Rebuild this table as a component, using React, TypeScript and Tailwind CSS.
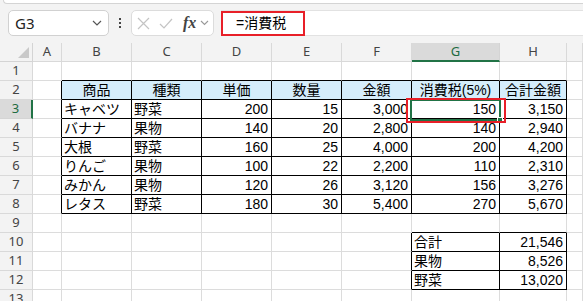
import { Fragment } from 'react'

type Cell = string | number | null

const COLS = ['A', 'B', 'C', 'D', 'E', 'F', 'G', 'H', '']

const fmt = (v: Cell) => (typeof v === 'number' ? v.toLocaleString('en-US') : v ?? '')

// rows 1..13, columns A..I
const ROWS: Cell[][] = [
  [],
  [null, '商品', '種類', '単価', '数量', '金額', '消費税(5%)', '合計金額'],
  [null, 'キャベツ', '野菜', 200, 15, 3000, 150, 3150],
  [null, 'バナナ', '果物', 140, 20, 2800, 140, 2940],
  [null, '大根', '野菜', 160, 25, 4000, 200, 4200],
  [null, 'りんご', '果物', 100, 22, 2200, 110, 2310],
  [null, 'みかん', '果物', 120, 26, 3120, 156, 3276],
  [null, 'レタス', '野菜', 180, 30, 5400, 270, 5670],
  [],
  [null, null, null, null, null, null, '合計', 21546],
  [null, null, null, null, null, null, '果物', 8526],
  [null, null, null, null, null, null, '野菜', 13020],
  [],
]

// bordered ranges: B2:H8 and G10:H12
function inTable(r: number, c: number) {
  if (r >= 2 && r <= 8 && c >= 1 && c <= 7) return true
  if (r >= 10 && r <= 12 && c >= 6 && c <= 7) return true
  return false
}

function NameBox() {
  return (
    <div className="flex h-[26px] w-[101px] items-center justify-between rounded-[5px] border border-[#d1d1d1] bg-white pl-[6px] pr-[6px]">
      <span className="font-['Noto_Sans'] text-[15px] text-[#222]">G3</span>
      <svg width="10" height="6" viewBox="0 0 10 6" fill="none" stroke="#555" strokeWidth="1.2">
        <path d="M1 1l4 4 4-4" />
      </svg>
    </div>
  )
}

function FormulaButtons() {
  return (
    <div className="flex h-[26px] w-[83px] items-center rounded-[5px] border border-[#dcdcdc] bg-white pl-[5px]">
      <svg width="13" height="13" viewBox="0 0 13 13" stroke="#c4c4c4" strokeWidth="1.2">
        <path d="M1 1l11 11M12 1L1 12" />
      </svg>
      <svg className="ml-[9px]" width="14" height="11" viewBox="0 0 14 11" fill="none" stroke="#c4c4c4" strokeWidth="1.2">
        <path d="M1 6l4 4 8-9" />
      </svg>
      <span className="ml-[10px] font-['Liberation_Serif'] text-[16px] italic font-bold text-[#444] leading-none">fx</span>
      <svg className="ml-[4px]" width="9" height="6" viewBox="0 0 9 6" fill="none" stroke="#999" strokeWidth="1.1">
        <path d="M1 1l3.5 3.5L8 1" />
      </svg>
    </div>
  )
}

export default function App() {
  return (
    <div className="h-[301px] w-[583px] overflow-hidden bg-[#f3f3f3] font-['Liberation_Sans','Noto_Sans_CJK_JP',sans-serif]">
      {/* ribbon edge */}
      <div className="ml-[3px] h-[4px] rounded-bl-[5px] border-b border-l border-[#d4d4d4] bg-white" />

      {/* formula bar */}
      <div className="ml-[8px] mt-[6px] flex h-[26px] items-center">
        <NameBox />
        <div className="ml-[10px] flex w-[3px] flex-col gap-[2px]">
          <span className="h-[2px] w-[2px] bg-[#444]" />
          <span className="h-[2px] w-[2px] bg-[#444]" />
          <span className="h-[2px] w-[2px] bg-[#444]" />
        </div>
        <div className="ml-[9px]">
          <FormulaButtons />
        </div>
        <div className="ml-[7px] flex h-[26px] flex-1 items-center border-y border-[#e2e2e2] bg-white">
          <div className="flex h-[25px] w-[84px] items-center border-2 border-[#e81f28] pl-[13px] text-[14px] text-black">
            =消費税
          </div>
        </div>
      </div>

      <div className="h-[7px]" />

      {/* sheet */}
      <div className="relative grid grid-cols-[33px_29px_70px_70px_70px_70px_70px_88px_67px_1fr] bg-white">
        {/* column headers */}
        <div className="relative h-[19px] border-b border-r border-[#d4d4d4] bg-[#f3f3f3]">
          <svg className="absolute right-[3px] bottom-[3px]" width="11" height="11" viewBox="0 0 11 11">
            <path d="M11 0V11H0z" fill="#c9c9c9" />
          </svg>
        </div>
        {COLS.map((l, i) =>
          i === 6 ? (
            <div
              key={l + i}
              className="flex h-[19px] items-center justify-center border-b-2 border-r border-b-[#217346] border-r-[#d4d4d4] bg-[#dadada] font-['Noto_Sans'] text-[13px] text-[#1d6b41]"
            >
              {l}
            </div>
          ) : (
            <div
              key={l + i}
              className="flex h-[19px] items-center justify-center border-b border-r border-[#d9d9d9] bg-[#f3f3f3] font-['Noto_Sans'] text-[13px] text-[#444]"
            >
              {l}
            </div>
          ),
        )}

        {ROWS.map((row, ri) => {
          const r = ri + 1
          return (
            <Fragment key={r}>
              {r === 3 ? (
                <div className="flex h-[19px] items-center justify-center border-b border-r-2 border-b-[#d4d4d4] border-r-[#217346] bg-[#dadada] font-['Noto_Sans'] text-[13px] text-[#1d6b41]">
                  {r}
                </div>
              ) : (
                <div className="flex h-[19px] items-center justify-center border-b border-r border-[#d9d9d9] bg-[#f3f3f3] font-['Noto_Sans'] text-[13px] text-[#444]">
                  {r}
                </div>
              )}
              {COLS.map((_, c) => {
                const v = row[c] ?? null
                const right = inTable(r, c) || inTable(r, c + 1) ? 'border-r-black' : 'border-r-[#dcdcdc]'
                const bottom = inTable(r, c) || inTable(r + 1, c) ? 'border-b-black' : 'border-b-[#dcdcdc]'
                const head = r === 2 && inTable(r, c)
                const align = head
                  ? 'justify-center bg-[#d5edfb]'
                  : typeof v === 'number'
                    ? 'justify-end pr-[3px]'
                    : 'justify-start pl-[2px]'
                return (
                  <div
                    key={c}
                    className={`flex h-[19px] items-center overflow-visible whitespace-nowrap border-b border-r text-[14px] leading-none text-black ${right} ${bottom} ${align}`}
                  >
                    {fmt(v)}
                  </div>
                )
              })}
            </Fragment>
          )
        })}

        {/* active cell G3 */}
        <div className="absolute left-[410px] top-[56px] h-[22px] w-[91px] border-2 border-[#217346]" />
        <div className="absolute left-[497px] top-[74px] h-[6px] w-[6px] border border-white bg-[#217346]" />
        {/* highlight box */}
        <div className="absolute left-[406px] top-[55px] h-[25px] w-[100px] border-2 border-[#e81f28]" />
      </div>
    </div>
  )
}
